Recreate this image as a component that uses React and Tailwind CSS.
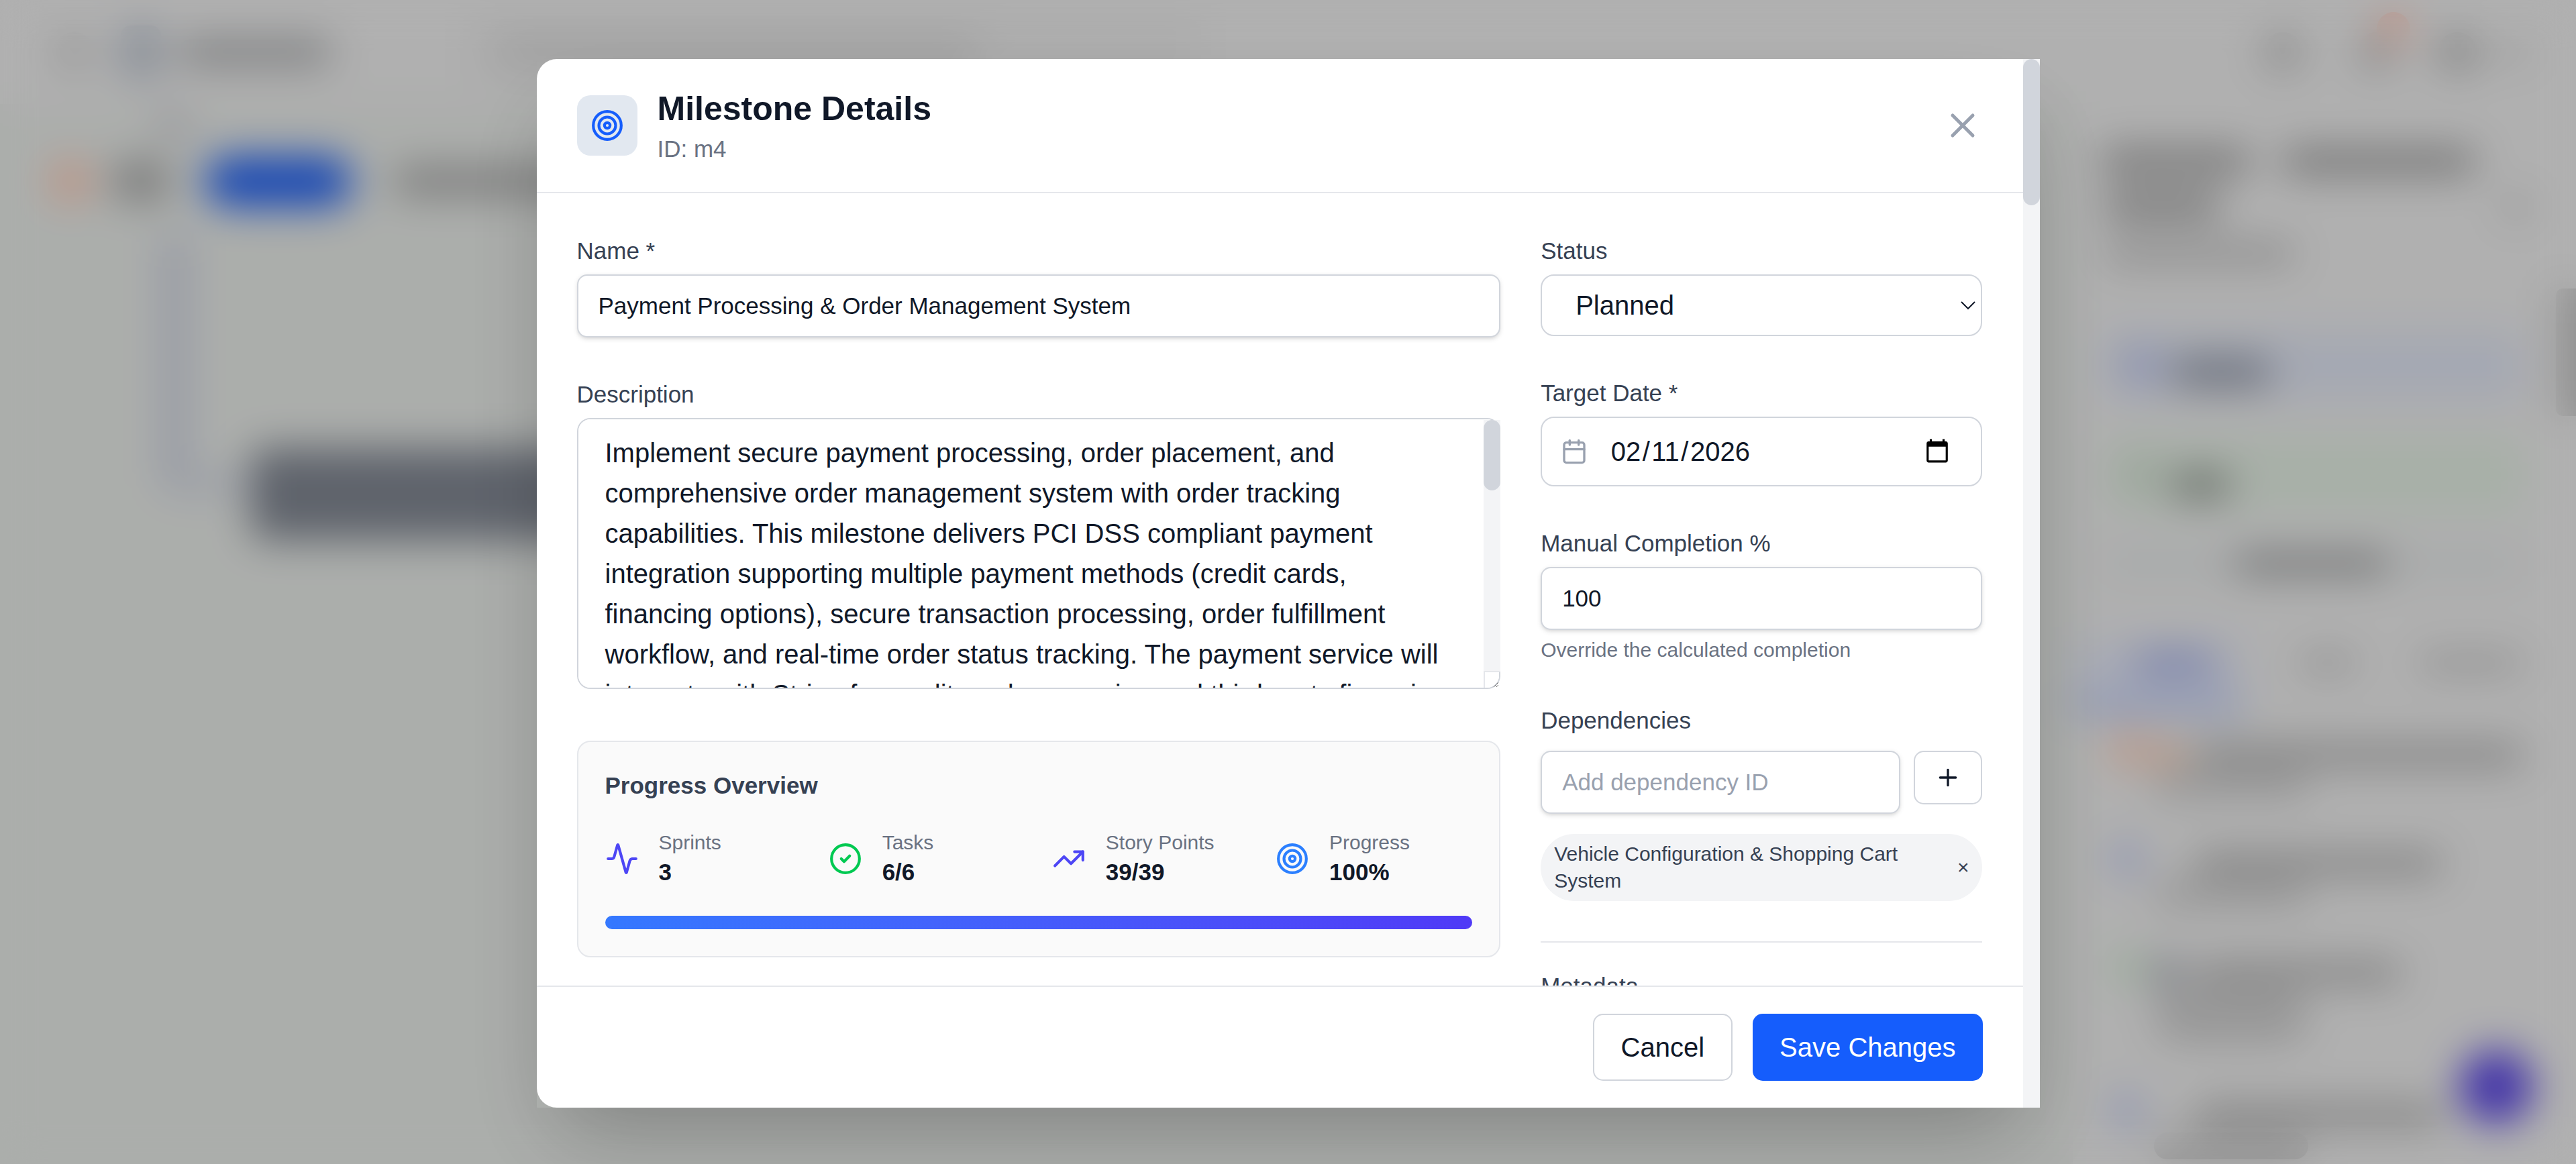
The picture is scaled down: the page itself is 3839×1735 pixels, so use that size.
import React from 'react';
import { Activity, Calendar, CircleCheck, Plus, Target, TrendingUp, X } from 'lucide-react';

const description =
  'Implement secure payment processing, order placement, and comprehensive order management system with order tracking capabilities. This milestone delivers PCI DSS compliant payment integration supporting multiple payment methods (credit cards, financing options), secure transaction processing, order fulfillment workflow, and real-time order status tracking. The payment service will integrate with Stripe for credit card processing and third-party financing';

const Blob = ({ className }) => <div className={`rounded-full ${className}`} />;

const ListRow = ({ dot, extra, w, sub = 'h-4', className = '' }) => (
  <div className={`flex gap-1 pl-1.5 ${className}`}>
    <Blob className={`h-5 w-5 shrink-0 -translate-y-[3px] ${dot}`} />
    <div>
      <div className="flex items-center gap-1.5">
        {extra ? <Blob className={`h-5 w-5 ${extra}`} /> : <div className="h-5 w-5" />}
        <Blob className={`h-[14px] ${w} bg-[#b0b0b0]`} />
      </div>
      <Blob className={`ml-0.5 ${sub} w-[92px] bg-[#cacaca]`} />
    </div>
  </div>
);

// blurred page sitting behind the dialog
const BackgroundPage = () => (
  <div className="flex h-full flex-col bg-[#ebebeb]">
    <header className="flex h-[62px] shrink-0 items-center pl-8 pr-[27px]">
      <Blob className="h-6 w-6 bg-[#cfcfcf]" />
      <div className="ml-4 h-8 w-6 rounded-md bg-[#b8c0cc]" />
      <Blob className="ml-2.5 h-4 w-[92px] bg-[#aaacae]" />
      <div className="ml-[82px] flex h-10 w-[436px] items-center rounded-lg bg-[#e6e6e6] px-4">
        <Blob className="h-4 w-72 bg-[#d4d4d4]" />
      </div>
      <div className="ml-auto flex items-center">
        <Blob className="h-6 w-6 bg-[#c0c0c0]" />
        <div className="relative ml-8">
          <Blob className="h-6 w-6 bg-[#c4c4c4]" />
          <Blob className="absolute -right-2 -top-3 h-5 w-5 bg-[#ffc4b4]" />
        </div>
        <Blob className="ml-6 h-6 w-6 bg-[#b4b4b4]" />
        <Blob className="ml-2 h-3 w-6 bg-[#d4d4d4]" />
      </div>
    </header>
    <div className="flex min-h-0 flex-1">
      <div className="relative flex-1 bg-[#e5e8e5]">
        <Blob className="absolute left-[93px] top-[2px] h-5 w-5 bg-[#c8c9d0]" />
        <div className="absolute left-[30px] top-[31px] flex items-center">
          <Blob className="h-6 w-6 bg-[#ffc2aa]" />
          <Blob className="ml-3 h-6 w-9 bg-[#a6a6a6]" />
          <Blob className="ml-5 h-[30px] w-[88px] bg-[#1f5fee]" />
          <Blob className="ml-6 h-4 w-[220px] bg-[#a2a2a2]" />
        </div>
        <div className="absolute left-[97px] top-[78px] h-[152px] w-[53px] rounded-bl-lg border-b-[8px] border-l-[14px] border-[#c4c9dc]" />
        <div className="absolute left-[150px] top-[205px] h-[55px] w-[320px] rounded-lg bg-[#7f8590]" />
      </div>
      <aside className="flex w-[300px] shrink-0 flex-col pl-[16.4px] pr-8">
        <div className="mt-[27px] flex gap-[18px]">
          <Blob className="h-[14px] w-[90px] bg-[#969696]" />
          <Blob className="h-[14px] w-[116px] bg-[#969696]" />
        </div>
        <div className="mt-3 flex items-center justify-between">
          <Blob className="ml-0.5 h-[14px] w-[70px] bg-[#969696]" />
          <Blob className="-mr-1 h-4 w-4 bg-[#cacaca]" />
        </div>
        <Blob className="ml-0.5 mt-3.5 h-3 w-[114px] bg-[#b8b8b8]" />
        <div className="ml-0.5 mt-[41px] flex h-10 items-center gap-2 rounded-lg bg-[#dce1ef] pl-3">
          <Blob className="h-5 w-5 bg-[#b4bcec]" />
          <Blob className="mt-2 h-4 w-[60px] bg-[#8c92a0]" />
        </div>
        <div className="ml-0.5 mt-[22px] flex h-[46px] items-center gap-2 rounded-lg bg-[#e0ebe0] pl-3">
          <Blob className="h-5 w-5 bg-[#c8d8c8]" />
          <Blob className="mt-3 h-4 w-[36px] bg-[#8e958e]" />
        </div>
        <div className="mt-5 flex h-5 items-center justify-center rounded-lg bg-[#e1e4e4]">
          <Blob className="h-3 w-[92px] bg-[#959797]" />
        </div>
        <div className="mt-[36px] flex items-start">
          <div className="-ml-4 w-[102px] border-b-4 border-[#6f8ff5] bg-[#dfe3f2] pb-[18px] pl-3 pt-[7px]">
            <Blob className="ml-6 h-3 w-12 bg-[#98a4e2]" />
          </div>
          <Blob className="ml-[34px] mt-[7px] h-3 w-9 bg-[#c4c4c4]" />
          <Blob className="ml-9 mt-[7px] h-3 w-16 bg-[#c4c4c4]" />
        </div>
        <div className="mt-[17px] flex flex-col gap-[29px]">
          <ListRow dot="bg-[#fbc4ac]" extra="bg-[#f5c6ac]" w="w-[196px]" />
          <ListRow dot="bg-[#bcc5ee]" w="w-[148px]" />
          <ListRow dot="bg-[#cde8cd]" extra="bg-[#a8acb4]" w="w-[124px]" sub="h-8" />
          <ListRow dot="bg-[#bcc5ee]" w="w-[148px]" className="mt-1" />
        </div>
      </aside>
    </div>
    <Blob className="absolute left-[1466px] top-[626px] h-11 w-11 bg-[#5a46e0]" />
    <div className="absolute right-0 top-[172px] h-[76px] w-3 rounded-l bg-[#c4c4c4]" />
  </div>
);

const Label = ({ children }) => (
  <label className="mb-1 block text-sm text-gray-700">{children}</label>
);

const Stat = ({ icon, label, value }) => (
  <div className="flex items-center gap-3">
    {icon}
    <div>
      <p className="text-xs text-gray-500">{label}</p>
      <p className="text-sm font-bold text-gray-900">{value}</p>
    </div>
  </div>
);

const inputClass =
  'w-full rounded-md border border-gray-300 bg-white px-3 py-2 text-sm text-gray-900 shadow-sm placeholder:text-gray-400';

const MilestoneModal = () => (
  <div className="flex h-[625.2px] w-[896px] shadow-2xl">
    <div className="flex min-w-0 flex-1 flex-col overflow-hidden rounded-l-xl bg-white">
      <div className="flex h-20 shrink-0 items-center justify-between border-b border-gray-200 px-6">
        <div className="flex items-center gap-3">
          <div className="flex h-9 w-9 items-center justify-center rounded-lg bg-slate-200">
            <Target className="h-5 w-5 text-blue-600" />
          </div>
          <div>
            <h2 className="text-xl font-bold text-gray-900">Milestone Details</h2>
            <p className="text-sm text-gray-500">ID: m4</p>
          </div>
        </div>
        <button className="text-gray-400">
          <X className="h-6 w-6" />
        </button>
      </div>

      <div className="grid min-h-0 flex-1 grid-cols-3 gap-6 overflow-hidden p-6 pt-[24.5px]">
        <div className="col-span-2 space-y-6">
          <div>
            <Label>Name *</Label>
            <input className={inputClass} defaultValue="Payment Processing & Order Management System" />
          </div>
          <div className="pb-[6.5px]">
            <Label>Description</Label>
            <div className="relative">
              <textarea
                rows={6}
                defaultValue={description}
                className="block w-full resize-y rounded-lg border border-gray-300 bg-white py-2 pl-4 pr-[26px] text-base text-gray-900"
              />
              {/* textarea scrollbar */}
              <div className="absolute bottom-px right-0 top-px flex w-2.5 flex-col">
                <div className="flex-1 bg-gray-100">
                  <div className="h-[42px] rounded-full bg-gray-300" />
                </div>
                <div className="h-2.5 border-l border-t border-gray-200" />
              </div>
            </div>
          </div>
          <div className="rounded-lg border border-gray-200 bg-[#fafafa] p-4">
            <h3 className="mb-4 text-sm font-bold text-gray-700">Progress Overview</h3>
            <div className="grid grid-cols-4 gap-4">
              <Stat icon={<Activity className="h-5 w-5 text-[#4d46f5]" />} label="Sprints" value="3" />
              <Stat icon={<CircleCheck className="h-5 w-5 text-green-500" />} label="Tasks" value="6/6" />
              <Stat icon={<TrendingUp className="h-5 w-5 text-[#4d46f5]" />} label="Story Points" value="39/39" />
              <Stat icon={<Target className="h-5 w-5 text-blue-500" />} label="Progress" value="100%" />
            </div>
            <div className="mt-4 h-2 w-full rounded-full bg-gradient-to-r from-[#3478ff] to-indigo-600" />
          </div>
        </div>

        <div className="space-y-6">
          <div>
            <Label>Status</Label>
            <select className="w-full rounded-lg border border-gray-300 bg-white px-4 py-2 text-base text-gray-900">
              <option>Planned</option>
            </select>
          </div>
          <div>
            <Label>Target Date *</Label>
            <div className="relative">
              <Calendar className="absolute left-3 top-1/2 h-4 w-4 -translate-y-1/2 text-gray-400" />
              <input
                type="date"
                defaultValue="2026-02-11"
                className="w-full rounded-lg border border-gray-300 bg-white py-2 pl-10 pr-4 text-base text-gray-900"
              />
            </div>
          </div>
          <div>
            <Label>Manual Completion %</Label>
            <input className={inputClass} defaultValue="100" />
            <p className="mt-1 text-xs text-gray-500">Override the calculated completion</p>
          </div>
          <div>
            <label className="mb-2 block text-sm text-gray-700">Dependencies</label>
            <div className="flex items-start gap-2">
              <input className={inputClass} placeholder="Add dependency ID" />
              <button className="flex h-8 w-[41px] shrink-0 items-center justify-center rounded-md border border-gray-300 bg-white text-gray-900">
                <Plus className="h-4 w-4" />
              </button>
            </div>
            <div className="mt-3 flex items-center gap-1 rounded-full bg-gray-100 px-2 py-1 text-xs text-gray-700">
              <span>Vehicle Configuration &amp; Shopping Cart System</span>
              <button>×</button>
            </div>
          </div>
          <div className="border-t border-gray-200 pt-4">
            <p className="text-sm text-gray-700">Metadata</p>
          </div>
        </div>
      </div>

      <div className="flex shrink-0 justify-end gap-3 border-t border-gray-200 p-4 pr-6">
        <button className="h-10 rounded-md border border-gray-300 bg-white px-4 text-base text-gray-900">Cancel</button>
        <button className="h-10 rounded-md bg-blue-600 px-4 text-base text-white">Save Changes</button>
      </div>
    </div>
    {/* dialog scrollbar */}
    <div className="w-2.5 shrink-0 bg-gray-100">
      <div className="h-[87px] rounded-full bg-gray-300" />
    </div>
  </div>
);

const App = () => (
  <div className="relative h-[694px] w-[1535.6px] overflow-hidden font-['Liberation_Sans',Arial,sans-serif] [zoom:2.5]">
    <BackgroundPage />
    <div className="absolute inset-0 flex justify-center bg-black/25 pt-[35.2px] backdrop-blur-md">
      <MilestoneModal />
    </div>
  </div>
);

export default App;
